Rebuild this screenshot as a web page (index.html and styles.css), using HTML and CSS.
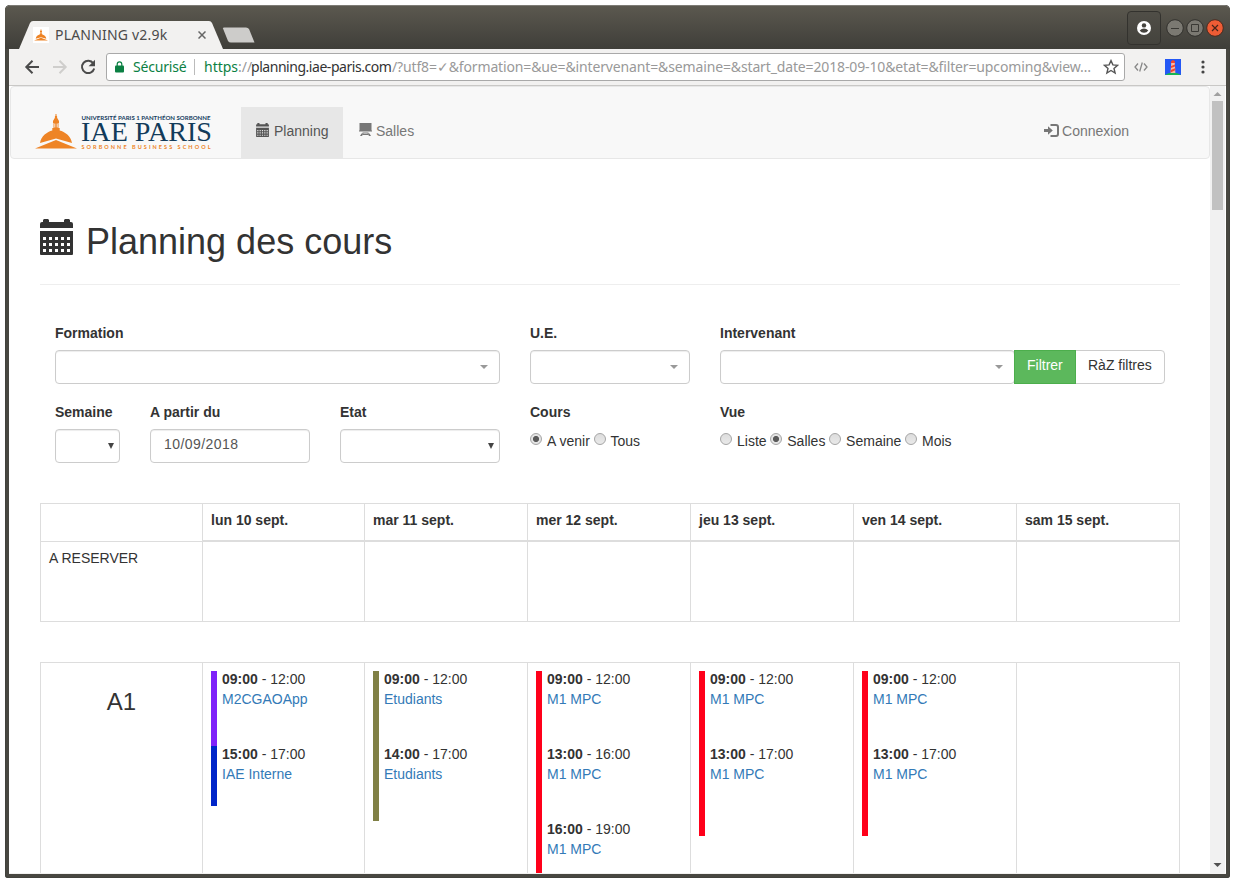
FILE: index.html
```html
<!DOCTYPE html>
<html lang="fr">
<head>
<meta charset="utf-8">
<title>PLANNING v2.9k</title>
<link rel="stylesheet" href="styles.css">
</head>
<body>
<svg class="defs" width="0" height="0">
  <symbol id="calendar" viewBox="0 0 33 36">
    <path fill-rule="evenodd" d="M0 9V5a2 2 0 0 1 2-2h1V1l1-1h4l1 1v2h15V1l1-1h4l1 1v2h1a2 2 0 0 1 2 2v4zM0 12h33v23a1 1 0 0 1-1 1H1a1 1 0 0 1-1-1zM3 18v3h3v-3zm6 0v3h3v-3zm6 0v3h3v-3zm6 0v3h3v-3zm6 0v3h3v-3zM3 24v3h3v-3zm6 0v3h3v-3zm6 0v3h3v-3zm6 0v3h3v-3zm6 0v3h3v-3zM3 30v3h3v-3zm6 0v3h3v-3zm6 0v3h3v-3zm6 0v3h3v-3zm6 0v3h3v-3z"/>
  </symbol>
  <symbol id="dome" viewBox="0 0 42 36">
    <path d="M20.500 0h1v1.800l.6.400v1.600l1.900 3.200v2h-.5v5h1.200v2.500c5 1.300 11.300 5.500 12.300 12.500L21 24.500 5 29C6 22 12.300 17.800 17.300 16.500V14h1.200V9H18V7l1.900-3.200V2.200l.6-.4z"/>
    <path d="M0 34.500L21 26l21 8.500z"/>
    <path d="M19.800 9.500v4M22.200 9.500v4" stroke="#f8f8f8" stroke-width=".9"/>
  </symbol>
</svg>
<div class="window">
  <header class="titlebar">
    <div class="tab">
      <svg class="tab-shape" width="204" height="28" viewBox="0 0 204 28"><path d="M0 28L11 2Q12 0 14 0H190Q192 0 193 2L204 28z" fill="#f2f1f0"/></svg>
      <span class="favicon"><svg width="14" height="12" fill="#ee8426"><use href="#dome"/></svg></span>
      <span class="tab-title">PLANNING v2.9k</span>
      <svg class="tab-close" width="8" height="8" viewBox="0 0 8 8"><path d="M.5.5l7 7m0-7l-7 7" stroke="#666" stroke-width="1.500"/></svg>
    </div>
    <svg class="new-tab" width="34" height="16" viewBox="0 0 34 16"><path d="M1 1.500Q1 .5 2 .5H24Q26 .5 27 2L32.500 15.500H9Q7 15.500 6 14z" fill="#cdccca"/></svg>
    <div class="user-button">
      <svg width="14" height="14" viewBox="0 0 14 14"><circle cx="7" cy="7" r="7" fill="#fff"/><circle cx="7" cy="4.400" r="2.200" fill="#45433e"/><path d="M2.700 9.600Q4.500 7.600 7 7.600t4.300 2Q9.800 11.800 7 11.800T2.700 9.600z" fill="#45433e"/></svg>
    </div>
    <div class="window-controls">
      <svg width="18" height="18" viewBox="0 0 18 18"><circle cx="9" cy="9" r="8.300" fill="#7b7972" stroke="#32312d"/><path d="M5 9.500h8" stroke="#3a3935"/></svg>
      <svg width="18" height="18" viewBox="0 0 18 18"><circle cx="9" cy="9" r="8.300" fill="#7b7972" stroke="#32312d"/><path d="M5.500 5.500h7v7h-7z" fill="none" stroke="#3a3935"/></svg>
      <svg width="18" height="18" viewBox="0 0 18 18"><circle cx="9" cy="9" r="8.300" fill="#ee5c35" stroke="#4b2b20"/><path d="M6 6l6 6m0-6l-6 6" stroke="#452419" stroke-width="1.200"/></svg>
    </div>
  </header>
  <div class="toolbar">
    <svg class="nav-icon" width="16" height="16" viewBox="0 0 16 16"><path d="M15 8H2.500M8.500 1.800L2.300 8l6.200 6.200" fill="none" stroke="#4b4b4b" stroke-width="2"/></svg>
    <svg class="nav-icon" width="16" height="16" viewBox="0 0 16 16"><path d="M1 8h12.500M7.500 1.800L13.700 8l-6.200 6.200" fill="none" stroke="#cfcecc" stroke-width="2"/></svg>
    <svg class="nav-icon" width="16" height="16" viewBox="0 0 16 16"><path d="M13.300 4.300A6.200 6.200 0 1 0 14.200 9.500" fill="none" stroke="#4b4b4b" stroke-width="2"/><path d="M15 .8v6.400H8.600z" fill="#4b4b4b"/></svg>
    <div class="address">
      <svg class="lock" width="9" height="12" viewBox="0 0 9 12"><path d="M2.200 5V3.200a2.300 2.300 0 0 1 4.600 0V5" fill="none" stroke="#0b8043" stroke-width="1.200"/><rect y="4.500" width="9" height="7" rx="1" fill="#0b8043"/></svg>
      <span class="secure">Sécurisé</span>
      <span class="url"><span class="scheme">https</span><span class="slashes">://</span><span class="host">planning.iae-paris.com</span><span class="query">/?utf8=✓&amp;formation=&amp;ue=&amp;intervenant=&amp;semaine=&amp;start_date=2018-09-10&amp;etat=&amp;filter=upcoming&amp;view…</span></span>
      <svg class="star" width="16" height="16" viewBox="0 0 16 16"><path d="M8 1.600l1.900 4.300 4.700.4-3.600 3.100 1.100 4.600L8 11.500 3.900 14 5 9.400 1.400 6.300l4.700-.4z" fill="none" stroke="#555" stroke-width="1.400"/></svg>
    </div>
    <svg class="code" width="14" height="10" viewBox="0 0 14 10"><path d="M4 1.500L1 5l3 3.500M10 1.500L13 5l-3 3.500M8.300.5l-2.600 9" fill="none" stroke="#888" stroke-width="1.300"/></svg>
    <svg class="lighthouse" width="16" height="16" viewBox="0 0 16 16"><path d="M0 0h16v16H0z" fill="#2458f5"/><path d="M0 16Q3 13.500 8 13.500T16 16z" fill="#14b553"/><path d="M6.200 4h3.600l.6 10H5.600z" fill="#f7b9a2"/><path d="M6 2.500Q8-.5 10 2.500V4H6zM6 7l4-1.500v2L6 9zM5.700 11l4.500-1.800v2L5.600 13.500z" fill="#f4452e"/></svg>
    <svg class="dots" width="4" height="14" viewBox="0 0 4 14" fill="#444"><circle cx="2" cy="2" r="1.600"/><circle cx="2" cy="7" r="1.600"/><circle cx="2" cy="12" r="1.600"/></svg>
  </div>
  <div class="viewport">
    <div class="page">
      <nav class="navbar">
        <svg class="brand" width="178" height="38" viewBox="0 0 178 38">
          <use href="#dome" x="0" y="1" width="42" height="36" fill="#ee8426"/>
          <text class="brand-top" x="46.500" y="6.500" textLength="129" lengthAdjust="spacingAndGlyphs">UNIVERSITÉ PARIS 1 PANTHÉON SORBONNE</text>
          <text class="brand-name" x="46" y="28" textLength="131" lengthAdjust="spacingAndGlyphs">IAE PARIS</text>
          <text class="brand-sub" x="46.500" y="35.500" textLength="129">SORBONNE BUSINESS SCHOOL</text>
        </svg>
        <a class="nav-link active"><svg class="cal-small" width="13" height="14" fill="#555"><use href="#calendar"/></svg>Planning</a>
        <a class="nav-link salles"><svg class="board" width="13" height="13" viewBox="0 0 13 13" fill="#777"><path d="M.5 0h12v7.500h-12zM0 7.500h13v1H0zM3.500 9.500h6v1h-6zM2.500 10.500h2L3 13H1zM8.500 10.500h2L12 13h-2zM4 11h5v1H4z"/></svg>Salles</a>
        <a class="nav-link login"><svg class="login-icon" width="15" height="13" viewBox="0 0 15 13"><path d="M0 5h4V2.200L8.800 6.500 4 10.800V8H0z" fill="#777"/><path d="M6.500 1H12q2 0 2 2v7q0 2-2 2H6.500" fill="none" stroke="#777" stroke-width="2"/></svg>Connexion</a>
      </nav>
      <main class="container">
        <h1 class="heading"><svg width="33" height="36" fill="#333"><use href="#calendar"/></svg><span>Planning des cours</span></h1>
        <form class="filters">
          <div class="field span5"><label>Formation</label><div class="control chosen"></div></div>
          <div class="field span2"><label>U.E.</label><div class="control chosen"></div></div>
          <div class="field span5"><label>Intervenant</label>
            <div class="group"><div class="control chosen"></div><span class="btn success">Filtrer</span><span class="btn reset">RàZ filtres</span></div>
          </div>
          <div class="field span1"><label>Semaine</label><div class="control native"></div></div>
          <div class="field span2"><label>A partir du</label><div class="control date">10/09/2018</div></div>
          <div class="field span2"><label>Etat</label><div class="control native"></div></div>
          <div class="field span2"><label>Cours</label><div class="radios"><i class="radio on"></i><span>A venir</span><i class="radio"></i><span>Tous</span></div></div>
          <div class="field span5"><label>Vue</label><div class="radios"><i class="radio"></i><span>Liste</span><i class="radio on"></i><span>Salles</span><i class="radio"></i><span>Semaine</span><i class="radio"></i><span>Mois</span></div></div>
        </form>
        <section class="table">
          <div class="row head"><div class="cell"></div><div class="cell">lun 10 sept.</div><div class="cell">mar 11 sept.</div><div class="cell">mer 12 sept.</div><div class="cell">jeu 13 sept.</div><div class="cell">ven 14 sept.</div><div class="cell">sam 15 sept.</div></div>
          <div class="row reserve"><div class="cell">A RESERVER</div><div class="cell"></div><div class="cell"></div><div class="cell"></div><div class="cell"></div><div class="cell"></div><div class="cell"></div></div>
        </section>
        <section class="table">
          <div class="row room">
            <div class="cell room-name">A1</div>
            <div class="cell">
              <div class="event h3 violet"><p><b>09:00</b> - 12:00</p><a>M2CGAOApp</a></div>
              <div class="event h2 blue"><p><b>15:00</b> - 17:00</p><a>IAE Interne</a></div>
            </div>
            <div class="cell">
              <div class="event h3 olive"><p><b>09:00</b> - 12:00</p><a>Etudiants</a></div>
              <div class="event h3 olive"><p><b>14:00</b> - 17:00</p><a>Etudiants</a></div>
            </div>
            <div class="cell">
              <div class="event h3 red"><p><b>09:00</b> - 12:00</p><a>M1 MPC</a></div>
              <div class="event h3 red"><p><b>13:00</b> - 16:00</p><a>M1 MPC</a></div>
              <div class="event h3 red"><p><b>16:00</b> - 19:00</p><a>M1 MPC</a></div>
            </div>
            <div class="cell">
              <div class="event h3 red"><p><b>09:00</b> - 12:00</p><a>M1 MPC</a></div>
              <div class="event h4 red"><p><b>13:00</b> - 17:00</p><a>M1 MPC</a></div>
            </div>
            <div class="cell">
              <div class="event h3 red"><p><b>09:00</b> - 12:00</p><a>M1 MPC</a></div>
              <div class="event h4 red"><p><b>13:00</b> - 17:00</p><a>M1 MPC</a></div>
            </div>
            <div class="cell"></div>
          </div>
        </section>
      </main>
    </div>
    <div class="scrollbar">
      <svg width="15" height="15" viewBox="0 0 15 15"><path d="M7.500 6l4 4h-8z" fill="#a0a0a0"/></svg>
      <div class="thumb"></div>
      <svg class="down" width="15" height="15" viewBox="0 0 15 15"><path d="M3.500 5h8l-4 4z" fill="#505050"/></svg>
    </div>
  </div>
</div>
</body>
</html>
```
FILE: styles.css
```css
* { box-sizing: border-box; }
body { margin: 0; padding: 5px; background: #fff; overflow: hidden; font: 14px/20px "Liberation Sans", Arial, sans-serif; color: #333; }
.defs { display: block; }
p { margin: 0; }
svg { flex: none; }

.window { width: 1225px; height: 873px; display: flex; flex-direction: column; padding: 0 4px 4px; background: #484741; border-radius: 5px 5px 3px 3px; box-shadow: inset 0 0 0 1px #42423d; overflow: hidden; }
.titlebar { height: 44px; flex: none; margin: 0 -4px; padding: 0 6px 0 14px; display: flex; align-items: flex-end; background: linear-gradient(#5b584f, #3f3e39); border-top: 1px solid #7d7b75; border-radius: 5px 5px 0 0; }
.tab { position: relative; width: 204px; height: 28px; display: flex; align-items: center; padding-left: 14px; font: 14px "Noto Sans", sans-serif; color: #4a4a4a; }
.tab-shape { position: absolute; left: 0; top: 0; }
.favicon { position: relative; width: 16px; height: 16px; background: #fff; display: flex; align-items: center; justify-content: center; }
.tab-title { position: relative; margin: 0 0 2px 6px; width: 114px; white-space: nowrap; letter-spacing: .2px; }
.tab-close { position: relative; margin-left: 29px; }
.new-tab { margin: 0 1px 6px -1px; }
.user-button { margin-left: auto; width: 34px; height: 34px; margin-bottom: 4px; display: flex; align-items: center; justify-content: center; border: 1px solid #33322e; border-radius: 4px; background: linear-gradient(#504e47, #44433d); }
.window-controls { display: flex; gap: 2px; margin: 0 0 12px 5px; }

.toolbar { height: 37px; flex: none; display: flex; align-items: center; background: #f2f1f0; border-bottom: 1px solid #c9c8c6; padding-left: 15px; }
.nav-icon { margin-right: 12px; }
.address { width: 1019px; height: 28px; margin-left: -2px; display: flex; align-items: center; padding: 0 5px 0 8px; background: #fff; border: 1px solid #a9a9a9; border-radius: 3px; font: 14px "Noto Sans", sans-serif; white-space: nowrap; }
.secure { color: #0b8043; margin-left: 9px; width: 62px; height: 16px; line-height: 16px; border-right: 1px solid #bbb; letter-spacing: -.2px; }
.url { display: flex; margin: 0 0 2px 9px; width: 899px; color: #999; }
.scheme { color: #0b8043; width: 34px; }
.slashes { width: 13px; }
.host { color: #333; width: 141px; letter-spacing: -.46px; }
.query { letter-spacing: -.14px; }
.code { margin-left: 9px; }
.lighthouse { margin-left: 17px; }
.dots { margin-left: 20px; }

.viewport { flex: 1; min-height: 0; display: flex; background: #fff; overflow: hidden; padding: 0 1px; border-bottom: 1px solid #f2f1f0; }
.page { flex: 1; overflow: hidden; }
.scrollbar { width: 15px; display: flex; flex-direction: column; background: #f1f1f1; }
.thumb { width: 11px; height: 109px; margin-left: 2px; background: #c1c1c1; }
.down { margin-top: auto; }

.navbar { height: 73px; padding: 20px 24px 0; display: flex; background: #f8f8f8; border: 1px solid #e7e7e7; border-radius: 4px; }
.brand { margin: 6px 28px 0 0; overflow: visible; }
.brand-top { font: bold 6px Lato, sans-serif; fill: #17405f; }
.brand-name { font: 28px "Liberation Serif", serif; fill: #123b5a; }
.brand-sub { font: bold 5.500px Lato, sans-serif; fill: #ee8426; }
.nav-link { height: 51px; display: flex; align-items: center; padding: 0 15px 4px; color: #777; }
.active { width: 102px; background: #e7e7e7; color: #555; }
.cal-small, .board { margin-right: 5px; margin-top: -2px; }
.salles { padding-left: 16px; }
.salles .board { margin-right: 4px; }
.login { margin-left: auto; padding-right: 56px; }
.login-icon { margin-right: 3px; }

.container { width: 1140px; margin-left: 30px; }
.heading { display: flex; align-items: flex-start; height: 66px; margin: 60px 0 38px; border-bottom: 1px solid #eee; font-size: 36px; line-height: 40px; font-weight: 500; gap: 13px; }
.heading span { padding-top: 3px; }
.filters { display: grid; grid-template-columns: repeat(12, 95px); row-gap: 18px; }
.span1 { grid-column: span 1; }
.span2 { grid-column: span 2; }
.span5 { grid-column: span 5; }
.field { padding: 0 15px; height: 61px; }
label { display: block; font-weight: bold; margin-bottom: 7px; }
.control { position: relative; flex: 1; height: 34px; border: 1px solid #ccc; border-radius: 4px; background: #fff; box-shadow: inset 0 1px 1px rgba(0,0,0,.075); }
.chosen::after { content: ""; position: absolute; right: 11px; top: 14px; border: 4px solid transparent; border-top-color: #999; border-bottom: 0; }
.native::after { content: ""; position: absolute; right: 5px; top: 13px; border: 3.500px solid transparent; border-top: 6px solid #444; border-bottom: 0; }
.date { padding: 4px 13px; color: #555; letter-spacing: .45px; }
.group { display: flex; }
.btn { height: 34px; padding: 4px 12px; border: 1px solid #ccc; white-space: nowrap; }
.success { position: relative; width: 62px; margin-left: -1px; background: #5cb85c; border-color: #4cae4c; color: #fff; }
.reset { width: 90px; margin-left: -1px; border-radius: 0 4px 4px 0; }
.radios { display: flex; padding-top: 2px; }
.radios span { margin: 0 3.700px 0 5px; }
.radio { width: 12px; height: 12px; margin-top: 2px; border: 1px solid #a5a5a5; border-radius: 50%; background: linear-gradient(#ddd, #e9e9e9); }
.on { background: radial-gradient(circle, #5a5a5a 2.700px, #e4e4e4 3.400px); }

.table { margin-top: 40px; border-bottom: 1px solid #ddd; }
.row { display: grid; grid-template-columns: 162px 162px 163px 163px 163px 163px 164px; border-top: 1px solid #ddd; }
.cell { border-left: 1px solid #ddd; padding: 6px 8px; }
.cell:last-child { border-right: 1px solid #ddd; }
.head { height: 38px; font-weight: bold; }
.head .cell:not(:first-child) { border-bottom: 1px solid #ddd; }
.reserve { height: 80px; }
.room { height: 270px; }
.room .cell { padding-top: 8px; }
.room .room-name { padding-top: 29px; font-size: 24px; text-align: center; }
.event { border-left: 6px solid; padding-left: 5px; }
.event p, .event a { display: block; margin-top: -2px; margin-bottom: 2px; }
.event p { color: #333; }
.event a { color: #337ab7; }
.h2 { height: 60px; }
.h3 { height: 75px; }
.h4 { height: 90px; }
.event { display: flow-root; }
.violet { border-color: #7f22f9; }
.blue { border-color: #0026c9; }
.olive { border-color: #808045; }
.red { border-color: #ff001a; }
```
